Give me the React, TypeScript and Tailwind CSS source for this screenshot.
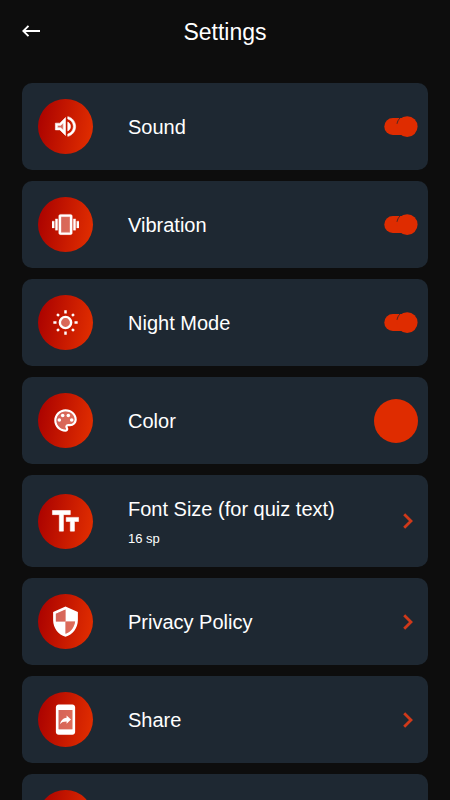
import { useState, type ReactNode } from "react";

function Icon({ large, children }: { large?: boolean; children: ReactNode }) {
  return (
    <svg viewBox="0 0 24 24" fill="currentColor" aria-hidden="true" className={large ? "size-[33px]" : "size-[27px]"}>
      {children}
    </svg>
  );
}

const soundIcon = (
  <Icon>
    <path opacity=".35" d="M5 11v2h2.83L10 15.17V8.83L7.83 11H5z" />
    <path
      stroke="currentColor"
      strokeWidth=".5"
      d="M3 9v6h4l5 5V4L7 9H3zm7-.17v6.34L7.83 13H5v-2h2.83L10 8.83zM16.5 12c0-1.77-1.02-3.29-2.5-4.03v8.05c1.48-.73 2.5-2.25 2.5-4.02zM14 3.23v2.06c2.89.86 5 3.54 5 6.71s-2.11 5.85-5 6.71v2.06c4.01-.91 7-4.49 7-8.77s-2.99-7.86-7-8.77z"
    />
  </Icon>
);

const vibrationIcon = (
  <Icon>
    <path opacity=".35" d="M8 5h8v14H8z" />
    <path
      stroke="currentColor"
      strokeWidth=".3"
      d="M0 9h2v6H0zM22 9h2v6h-2zM3 7h2v10H3zM19 7h2v10h-2zM16.5 3h-9C6.67 3 6 3.67 6 4.5v15c0 .83.67 1.5 1.5 1.5h9c.83 0 1.5-.67 1.5-1.5v-15c0-.83-.67-1.5-1.5-1.5zM16 19H8V5h8v14z"
    />
  </Icon>
);

const sunIcon = (
  <Icon>
    <circle cx="12" cy="12" r="4" opacity=".35" />
    <circle cx="12" cy="12" r="5" fill="none" stroke="currentColor" strokeWidth="2.2" />
    <path
      d="M12 1.200v2.800M12 20v2.800M1.200 12h2.800M20 12h2.800M4.500 4.500l1.700 1.700M17.800 17.800l1.700 1.700M4.500 19.500l1.700-1.700M17.800 6.200l1.700-1.700"
      fill="none"
      stroke="currentColor"
      strokeWidth="2.200"
    />
  </Icon>
);

const paletteIcon = (
  <Icon>
    <path
      opacity=".35"
      d="M12 4c-4.41 0-8 3.59-8 8s3.59 8 8 8c.28 0 .5-.22.5-.5 0-.16-.08-.28-.14-.35-.41-.46-.63-1.05-.63-1.65 0-1.38 1.12-2.5 2.5-2.5H16c2.21 0 4-1.79 4-4 0-3.86-3.59-7-8-7z"
    />
    <path d="M12 2C6.49 2 2 6.49 2 12s4.49 10 10 10c1.38 0 2.5-1.12 2.5-2.5 0-.61-.23-1.21-.64-1.67-.08-.09-.13-.21-.13-.33 0-.28.22-.5.5-.5H16c3.31 0 6-2.69 6-6 0-4.96-4.49-9-10-9zm4 13h-1.77c-1.38 0-2.5 1.12-2.5 2.5 0 .61.22 1.19.63 1.65.06.07.14.19.14.35 0 .28-.22.5-.5.5-4.41 0-8-3.59-8-8s3.59-8 8-8 8 3.14 8 7c0 2.21-1.79 4-4 4z" />
    <circle cx="6.5" cy="11.5" r="1.6" />
    <circle cx="9.5" cy="7.5" r="1.6" />
    <circle cx="14.5" cy="7.5" r="1.6" />
    <circle cx="17.5" cy="11.5" r="1.6" />
  </Icon>
);

const fontIcon = (
  <Icon large>
    <path stroke="currentColor" strokeWidth=".4" d="M2.5 4v3h5v12h3V7h5V4h-13zM21.5 9h-9v3h3v7h3v-7h3V9z" />
  </Icon>
);

const shieldIcon = (
  <Icon large>
    <path opacity=".35" d="M12 3.19V12H5V6.3l7-3.11zM12 12h7c-.53 4.12-3.28 7.79-7 8.94V12z" />
    <path
      fillRule="evenodd"
      d="M12 1L3 5v6c0 5.55 3.84 10.74 9 12 5.16-1.26 9-6.45 9-12V5l-9-4zM12 3.19V12H5V6.3l7-3.11zM12 12h7c-.53 4.12-3.28 7.79-7 8.94V12z"
    />
  </Icon>
);

const shareIcon = (
  <Icon large>
    <path opacity=".35" d="M7 5h10v14H7z" />
    <path fillRule="evenodd" d="M17 1H7c-1.1 0-2 .9-2 2v18c0 1.1.9 2 2 2h10c1.1 0 2-.9 2-2V3c0-1.1-.9-2-2-2zM7 5h10v14H7z" />
    <path d="M12.8 13.4v1.6L16 12l-3.200-3v1.700C9.690 11.150 8.440 13.300 8 15.430c1.110-1.500 2.580-2.030 4.800-2.030z" />
  </Icon>
);

function IconDisc({ children }: { children?: ReactNode }) {
  return (
    <span className="flex size-[55px] shrink-0 items-center justify-center rounded-full bg-linear-[100deg] from-[#a80000] to-[#e43000] text-white">
      {children}
    </span>
  );
}

const cardClass = "flex w-full items-center rounded-[10px] bg-[#1e2832] py-4 pr-[10px] pl-4 text-left";

function Label({ title, detail }: { title: string; detail?: string }) {
  return (
    <span className="ml-[35px] flex flex-1 flex-col text-[20px] leading-7">
      <span>{title}</span>
      {detail && <span className="mt-2 text-[13px] leading-4">{detail}</span>}
    </span>
  );
}

function ToggleRow({ title, icon }: { title: string; icon: ReactNode }) {
  const [on, setOn] = useState(true);
  return (
    <label className={cardClass + " cursor-pointer"}>
      <IconDisc>{icon}</IconDisc>
      <Label title={title} />
      <span className="grid h-[22px] w-[34px]">
        <input
          type="checkbox"
          checked={on}
          onChange={() => setOn(!on)}
          className="col-start-1 row-start-1 appearance-none"
        />
        <svg
          viewBox="0 0 34 22"
          aria-hidden="true"
          className={"pointer-events-none col-start-1 row-start-1 h-[22px] w-[34px] " + (on ? "text-[#df2c00]" : "-scale-x-100 text-gray-500")}
        >
          <rect x="0.3" y="2" width="26" height="17" rx="8.5" fill="currentColor" />
          <circle cx="23.2" cy="10.6" r="10.4" fill="currentColor" />
          <path d="M13 7.800c.5-2.300 1.400-4.200 3-5.800" fill="none" stroke="#1e2832" strokeWidth=".8" />
        </svg>
      </span>
    </label>
  );
}

function LinkRow({ title, detail, icon }: { title: string; detail?: string; icon: ReactNode }) {
  return (
    <button type="button" className={cardClass + (detail ? " min-h-[92px]" : "")}>
      <IconDisc>{icon}</IconDisc>
      <Label title={title} detail={detail} />
      <svg viewBox="0 0 10 16" aria-hidden="true" className="mr-[5px] h-4 w-[10px]">
        <path d="M1.2 1.2L8 8l-6.8 6.8" fill="none" stroke="#d0391a" strokeWidth="2.8" />
      </svg>
    </button>
  );
}

export default function App() {
  return (
    <div className="flex h-screen flex-col bg-[#0d0d0d] font-['Liberation_Sans',Arial,sans-serif] text-white">
      <header className="grid h-16 shrink-0 grid-cols-[1fr_auto_1fr] items-center px-[22px]">
        <button type="button" aria-label="Back" className="justify-self-start pb-0.5">
          <svg viewBox="0 0 18 12" aria-hidden="true" className="h-3 w-[18px]">
            <path d="M18 6H1.500M6.500.8L1.300 6l5.200 5.200" fill="none" stroke="currentColor" strokeWidth="1.900" />
          </svg>
        </button>
        <h1 className="text-[23px] leading-8">Settings</h1>
      </header>
      <main className="flex min-h-0 flex-1 flex-col gap-[11px] overflow-y-auto px-[22px] pt-[19px] [scrollbar-width:none] *:shrink-0">
        <ToggleRow title="Sound" icon={soundIcon} />
        <ToggleRow title="Vibration" icon={vibrationIcon} />
        <ToggleRow title="Night Mode" icon={sunIcon} />
        <button type="button" className={cardClass}>
          <IconDisc>{paletteIcon}</IconDisc>
          <Label title="Color" />
          <span className="size-11 rounded-full bg-[#df2c00]" />
        </button>
        <LinkRow title="Font Size (for quiz text)" detail="16 sp" icon={fontIcon} />
        <LinkRow title="Privacy Policy" icon={shieldIcon} />
        <LinkRow title="Share" icon={shareIcon} />
        <div className={cardClass}>
          <IconDisc />
        </div>
      </main>
    </div>
  );
}
